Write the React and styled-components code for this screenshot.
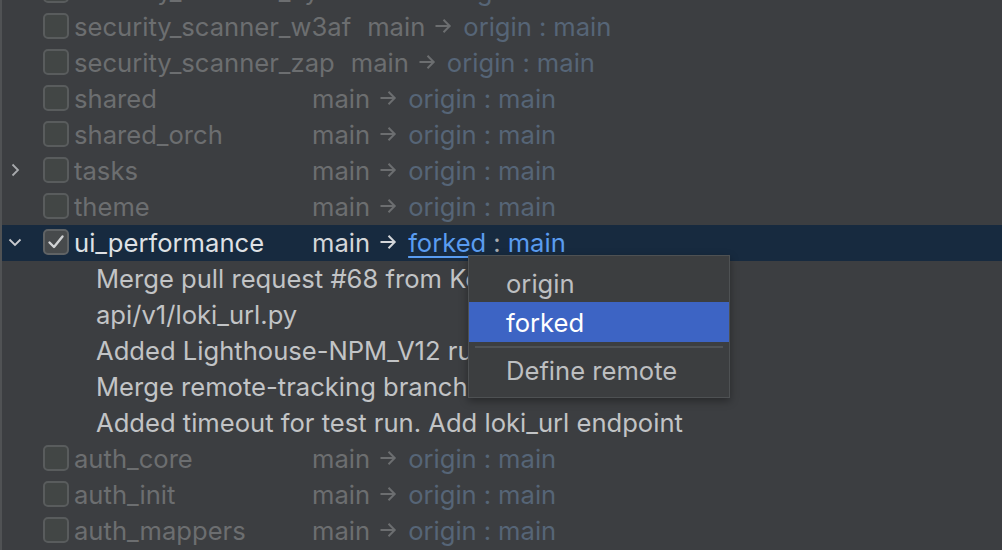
import React from 'react';
import styled, {createGlobalStyle} from 'styled-components';

const GlobalStyle = createGlobalStyle`
  html, body { margin: 0; padding: 0; background: #3c3e41; }
  body { font-family: Inter, "Noto Sans", "Liberation Sans", sans-serif; }
`

const Panel = styled.div`
  position: relative;
  width: 1002px;
  height: 550px;
  overflow: hidden;
  background: #3c3e41;
  border-left: 2px solid #505254;
  box-sizing: border-box;
`

const List = styled.div`
  display: flex;
  flex-direction: column;
  margin-top: -27px;
`

const Row = styled.div`
  display: flex;
  align-items: center;
  height: 36px;
  box-sizing: border-box;
  padding-bottom: 2px;
  font-size: 25.6px;
  background: ${p => p.selected ? '#172a3f' : 'transparent'};
  white-space: nowrap;
`

const Chevron = styled.div`
  width: 41px;
  display: flex;
  align-items: center;
  padding-left: 5px;
  box-sizing: border-box;
  color: ${p => p.selected ? '#c9cbcf' : '#a8aaad'};
`

const Check = styled.div`
  width: 26px;
  height: 26px;
  flex-shrink: 0;
  box-sizing: border-box;
  border: 2px solid ${p => p.checked ? '#606365' : '#595c5d'};
  border-radius: 5px;
  background: ${p => p.checked ? '#474a4c' : '#424645'};
  display: flex;
  align-items: center;
  justify-content: center;
  margin-right: 5px;
`

const Name = styled.span`
  min-width: 222px;
  margin-right: 16px;
  color: ${p => p.selected ? '#dfe1e5' : '#6c6e70'};
`

const Local = styled.span`
  display: inline-flex;
  align-items: center;
  color: ${p => p.selected ? '#d4d6d9' : '#6c6e70'};
`

const Remote = styled.span`
  color: ${p => p.selected ? '#5a9cf0' : '#566577'};
  text-decoration: ${p => p.selected ? 'underline' : 'none'};
  text-underline-offset: 4px;
  text-decoration-thickness: 2px;
`

const Colon = styled.span`
  color: ${p => p.selected ? '#a9abae' : '#566577'};
  margin: 0 7px;
`

const Commit = styled.div`
  height: 36px;
  box-sizing: border-box;
  padding-bottom: 2px;
  display: flex;
  align-items: center;
  padding-left: 94px;
  font-size: 25.6px;
  color: #c2c4c6;
  white-space: nowrap;
`

const Popup = styled.div`
  position: absolute;
  left: 466px;
  top: 255px;
  width: 260px;
  background: #3c3e40;
  border: 1px solid #4e5153;
  box-shadow: 0 3px 8px rgba(0,0,0,0.35);
  padding: 9px 0 8px;
  display: flex;
  flex-direction: column;
`

const Item = styled.div`
  height: ${p => p.active ? '40px' : '37px'};
  display: flex;
  align-items: center;
  padding-left: 37px;
  font-size: 25.6px;
  color: ${p => p.active ? '#ffffff' : '#bdbfc1'};
  background: ${p => p.active ? '#3d64c4' : 'transparent'};
`

const Separator = styled.div`
  height: 2px;
  background: #4f5255;
  margin: 4px 6px 4px 6px;
`

const Arrow = () => (
  <svg width="18" height="18" viewBox="0 0 18 18" style={{margin: '0 11px 0 9px'}}>
    <path d="M1.5 9h14.5M9.5 2.8L15.7 9l-6.2 6.2" fill="none" stroke="currentColor" strokeWidth="2" />
  </svg>
)

function ChevronIcon({open}) {
  return (
    <svg width="16" height="16" viewBox="0 0 16 16">
      {open
        ? <path d="M2.5 5.5L8 11l5.5-5.5" fill="none" stroke="currentColor" strokeWidth="1.8" />
        : <path d="M5.5 2.5L11 8l-5.5 5.5" fill="none" stroke="currentColor" strokeWidth="1.8" />}
    </svg>
  );
}

const repos = [
  {name: 'security_scanner_xyz'},
  {name: 'security_scanner_w3af'},
  {name: 'security_scanner_zap'},
  {name: 'shared'},
  {name: 'shared_orch'},
  {name: 'tasks', chevron: 'closed'},
  {name: 'theme'},
  {name: 'ui_performance', chevron: 'open', selected: true, remote: 'forked'},
];

const commits = [
  'Merge pull request #68 from KeyAuth/fork_main',
  'api/v1/loki_url.py',
  'Added Lighthouse-NPM_V12 runner',
  'Merge remote-tracking branch',
  'Added timeout for test run. Add loki_url endpoint',
];

const tail = [{name: 'auth_core'}, {name: 'auth_init'}, {name: 'auth_mappers'}];

function RepoRow({repo}) {
  const sel = !!repo.selected;
  return (
    <Row selected={sel}>
      <Chevron selected={sel}>
        {repo.chevron && <ChevronIcon open={repo.chevron === 'open'} />}
      </Chevron>
      <Check checked={sel}>
        {sel && (
          <svg width="18" height="18" viewBox="0 0 18 18">
            <path d="M2.5 9.5L7 14L15.5 3.5" fill="none" stroke="#d0d2d4" strokeWidth="2.4" strokeLinecap="round" strokeLinejoin="round" />
          </svg>
        )}
      </Check>
      <Name selected={sel}>{repo.name}</Name>
      <Local selected={sel}>main<Arrow /></Local>
      <Remote selected={sel}>{repo.remote || 'origin'}</Remote>
      <Colon selected={sel}>:</Colon>
      <Remote selected={sel}>main</Remote>
    </Row>
  );
}

export default function App() {
  return (
    <Panel>
      <GlobalStyle />
      <List>
        {repos.map(r => <RepoRow key={r.name} repo={r} />)}
        {commits.map(c => <Commit key={c}>{c}</Commit>)}
        {tail.map(r => <RepoRow key={r.name} repo={r} />)}
      </List>
      <Popup>
        <Item>origin</Item>
        <Item active>forked</Item>
        <Separator />
        <Item>Define remote</Item>
      </Popup>
    </Panel>
  );
}
